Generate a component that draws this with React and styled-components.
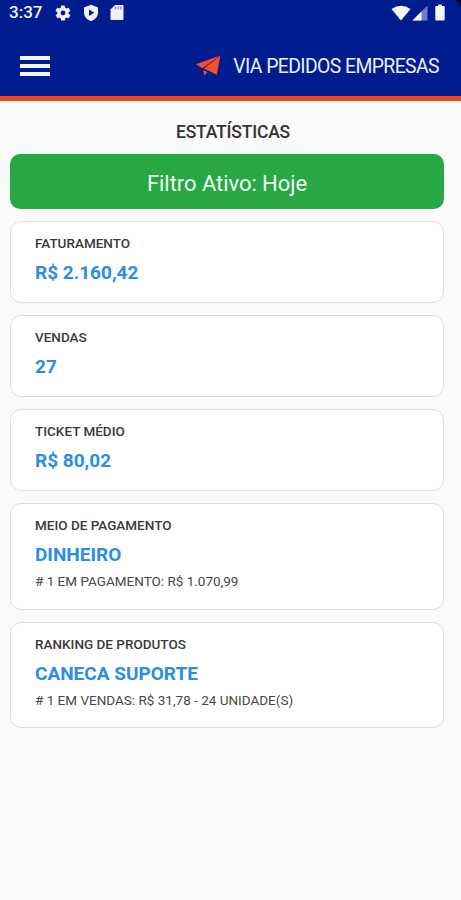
import React from "react";
import styled, { createGlobalStyle } from "styled-components";

const GlobalStyle = createGlobalStyle`
  * { box-sizing: border-box; }
  html, body { margin: 0; background: #fafafa; }
  body { font-family: Roboto, "Liberation Sans", sans-serif; overflow: hidden; }
  svg { display: block; flex: none; }
`;

const Screen = styled.div`
  width: 461px;
  height: 900px;
  background: #fafafa;
`;

const Header = styled.header`
  height: 101px;
  background: #001c8f;
  border-bottom: 5px solid #f4441e;
`;

const StatusBar = styled.div`
  position: relative;
  display: flex;
  justify-content: space-between;
  height: 26px;
  padding: 0 16px 0 9px;
`;

const StatusGroup = styled.div`
  display: flex;
  align-items: center;
  height: 25px;
  gap: ${(p) => p.$gap}px;
`;

const BatterySlot = styled.span`
  padding-left: 6px;
`;

const Clock = styled.span`
  width: 34px;
  color: #eef2ff;
  font-size: 17px;
  font-weight: 500;
  line-height: 25px;
`;

const Corner = styled.svg`
  position: absolute;
  top: 0;
  right: 0;
`;

const Toolbar = styled.div`
  display: flex;
  align-items: center;
  justify-content: space-between;
  height: 70px;
  padding: 9px 22px 0 20px;
`;

const MenuButton = styled.button`
  display: flex;
  flex-direction: column;
  gap: 4px;
  width: 30px;
  padding: 0;
  border: 0;
  background: none;
`;

const MenuLine = styled.span`
  height: 4px;
  background: #f3f6ff;
`;

const Brand = styled.div`
  display: flex;
  align-items: center;
  gap: 12px;
`;

const BrandName = styled.span`
  padding-top: 3px;
  color: #e8efff;
  font-size: 19.4px;
  line-height: 24px;
  white-space: nowrap;
  letter-spacing: -0.6px;
`;

const Content = styled.main`
  display: flex;
  flex-direction: column;
  padding: 19px 17px 0 10px;
`;

const Title = styled.h1`
  margin: 0 0 10px;
  padding-left: 12px;
  color: #333;
  font-size: 17.5px;
  font-weight: 500;
  line-height: 24px;
  letter-spacing: -0.2px;
  text-align: center;
`;

const FilterButton = styled.button`
  height: 55px;
  padding: 3px 0 0;
  border: 0;
  border-radius: 10px;
  background: #28a745;
  color: #effff0;
  font-family: inherit;
  font-size: 22px;
  letter-spacing: -0.05px;
`;

const CardList = styled.div`
  display: grid;
  gap: 12px;
  margin-top: 12px;
`;

const Card = styled.section`
  height: ${(p) => (p.$tall ? 106.5 : 82)}px;
  padding: 12px 24px 0;
  border: 1.5px solid #dedede;
  border-radius: 11px;
  background: #fff;
  white-space: nowrap;
`;

const Label = styled.h2`
  margin: 0;
  color: #3a3a3a;
  font-size: 13.5px;
  font-weight: 500;
  line-height: 18px;
`;

const Value = styled.p`
  margin: 7px 0 0;
  color: #2c8cea;
  font-size: 19px;
  font-weight: 700;
  line-height: 28px;
`;

const Detail = styled.p`
  margin: 3px 0 0;
  color: #484848;
  font-size: 13.5px;
  line-height: 18px;
`;

const cards = [
  { label: "FATURAMENTO", value: "R$ 2.160,42" },
  { label: "VENDAS", value: "27" },
  { label: "TICKET MÉDIO", value: "R$ 80,02" },
  { label: "MEIO DE PAGAMENTO", value: "DINHEIRO", detail: "# 1 EM PAGAMENTO: R$ 1.070,99" },
  { label: "RANKING DE PRODUTOS", value: "CANECA SUPORTE", detail: "# 1 EM VENDAS: R$ 31,78 - 24 UNIDADE(S)" },
];

const GearIcon = () => (
  <svg width="18" height="18" viewBox="0 0 24 24" fill="#eef2ff">
    <path fillRule="evenodd" d="M19.400 13a7.600 7.600 0 0 0 0-2l2.100-1.600a.5.5 0 0 0 .1-.700l-2-3.400a.5.5 0 0 0-.6-.200l-2.500 1a7.300 7.300 0 0 0-1.700-1l-.4-2.600a.5.5 0 0 0-.5-.5h-4a.5.5 0 0 0-.5.5L9 5.100a7.300 7.300 0 0 0-1.700 1l-2.500-1a.5.5 0 0 0-.6.200l-2 3.400a.5.5 0 0 0 .1.700L4.500 11a7.600 7.600 0 0 0 0 2l-2.100 1.600a.5.5 0 0 0-.1.700l2 3.400c.1.200.4.300.6.200l2.500-1a7.300 7.300 0 0 0 1.700 1l.4 2.600c0 .300.200.5.5.5h4c.300 0 .5-.200.5-.5l.4-2.600a7.300 7.300 0 0 0 1.700-1l2.500 1c.200.100.5 0 .6-.200l2-3.400a.5.5 0 0 0-.1-.700ZM12 15.200a3.200 3.200 0 1 1 0-6.400 3.200 3.200 0 0 1 0 6.400Z" />
  </svg>
);

const ShieldIcon = () => (
  <svg width="16" height="18" viewBox="0 0 16 18">
    <path d="M8 .8 15 3.500v5c0 4-2.900 7.300-7 8.700-4.100-1.400-7-4.700-7-8.700v-5Z" fill="#eef2ff" />
    <path d="m6 5.400 5.200 3.300L6 12Z" fill="#001c8f" />
  </svg>
);

const SdCardIcon = () => (
  <svg width="14" height="17" viewBox="0 0 14 17">
    <path d="M5 1h7.500q1 0 1 1v13q0 1-1 1h-11q-1 0-1-1V5.500Z" fill="#eef2ff" />
    <path d="M5.500 2.500v3M8.200 2.500v3M10.900 2.500v3" stroke="#7780bd" strokeWidth="1.200" />
  </svg>
);

const WifiIcon = () => (
  <svg width="20" height="16" viewBox="0 0 20 16">
    <path d="M.5 4Q10-2.500 19.500 4L10 15.500Z" fill="#f3f6ff" />
  </svg>
);

const SignalIcon = () => (
  <svg width="16" height="16" viewBox="0 0 16 16">
    <path d="M15.500.5v15H.5Z" fill="#6f7fc4" />
    <path d="M9.500 6.500v9h-9Z" fill="#f3f6ff" />
  </svg>
);

const BatteryIcon = () => (
  <svg width="10" height="17" viewBox="0 0 10 17">
    <path d="M3 .5h4V2h2q.7 0 .7.700v13q0 .8-.8.800H1.100q-.8 0-.8-.8v-13Q.3 2 1 2h2Z" fill="#f3f6ff" />
  </svg>
);

const PlaneIcon = () => (
  <svg width="25" height="22" viewBox="0 0 25 22">
    <path d="M24.500.6 0 9.300l6.200 4ZM24.500.6 8 13.600l12.700 6.200Z" fill="#f4512b" />
    <path d="m7.300 15.200 4.300 2.100-3.500 3.300Z" fill="#f4512b" />
    <path d="M24 1 7.200 13.200" stroke="#7c2b58" strokeWidth=".8" />
  </svg>
);

export default function App() {
  return (
    <Screen>
      <GlobalStyle />
      <Header>
        <StatusBar>
          <StatusGroup $gap={11}>
            <Clock>3:37</Clock>
            <GearIcon />
            <ShieldIcon />
            <SdCardIcon />
          </StatusGroup>
          <StatusGroup $gap={1}>
            <WifiIcon />
            <SignalIcon />
            <BatterySlot>
              <BatteryIcon />
            </BatterySlot>
          </StatusGroup>
          <Corner width="7" height="7" viewBox="0 0 7 7">
            <path d="M0 0h7v7Q6 2 0 0Z" fill="#05071c" />
          </Corner>
        </StatusBar>
        <Toolbar>
          <MenuButton aria-label="Menu">
            <MenuLine />
            <MenuLine />
            <MenuLine />
          </MenuButton>
          <Brand>
            <PlaneIcon />
            <BrandName>VIA PEDIDOS EMPRESAS</BrandName>
          </Brand>
        </Toolbar>
      </Header>
      <Content>
        <Title>ESTATÍSTICAS</Title>
        <FilterButton>Filtro Ativo: Hoje</FilterButton>
        <CardList>
          {cards.map(({ label, value, detail }) => (
            <Card key={label} $tall={Boolean(detail)}>
              <Label>{label}</Label>
              <Value>{value}</Value>
              {detail && <Detail>{detail}</Detail>}
            </Card>
          ))}
        </CardList>
      </Content>
    </Screen>
  );
}
